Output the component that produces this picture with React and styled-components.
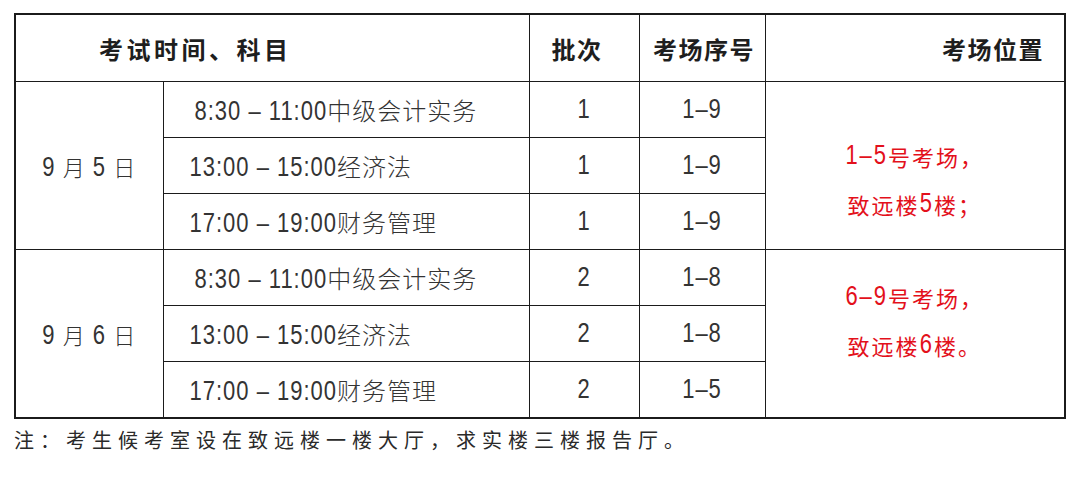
import styled, { createGlobalStyle } from "styled-components";

const GlobalStyle = createGlobalStyle`
  body {
    margin: 0;
    background: #ffffff;
    font-family: "Liberation Sans", "Noto Sans CJK SC", sans-serif;
  }
`;

const Page = styled.div`
  padding: 13px 0 0 14px;
`;

const Table = styled.table`
  border-collapse: collapse;
  table-layout: fixed;
  width: 1050px;
  border: 2px solid #1b1b1b;
`;

const Col = styled.col`
  width: ${({ w }) => w}px;
`;

const HeadCell = styled.th`
  height: 66px;
  border: 1.5px solid #1b1b1b;
  font-size: 24px;
  font-weight: 700;
  color: #1e1e1e;
  text-align: ${({ align }) => align || "center"};
  padding: ${({ pad }) => pad || "0"};
  letter-spacing: ${({ spacing }) => spacing || "1.5px"};
  white-space: nowrap;
`;

const Cell = styled.td`
  height: 55px;
  border: 1.5px solid #1b1b1b;
  font-size: 24px;
  font-weight: 300;
  color: #333333;
  letter-spacing: 1px;
  text-align: ${({ align }) => align || "center"};
  padding: ${({ pad }) => pad || "0"};
  white-space: nowrap;
  vertical-align: middle;
`;

const DateCell = styled(Cell)`
  font-size: 22px;
`;

const Place = styled(Cell)`
  color: #e3101b;
  font-size: 22px;
  font-weight: 400;
  line-height: 48px;
  letter-spacing: 2px;
  padding: ${({ shift }) => (shift > 0 ? `${shift * 2}px 0 0 0` : `0 0 ${-shift * 2}px 0`)};
`;

// the digits in the picture are tall and narrow
const Num = styled.span`
  display: inline-block;
  font-size: 22px;
  font-weight: 400;
  transform: scaleY(1.25);
  transform-origin: 50% 78%;
`;

const Note = styled.div`
  margin-top: 6px;
  font-size: 20px;
  color: #2a2a2a;
  letter-spacing: 6px;
  white-space: nowrap;
`;

const withNums = (text) =>
  text
    .split(/([0-9][0-9:\s–]*[0-9]|[0-9])/)
    .map((part, i) => (i % 2 === 1 ? <Num key={i}>{part}</Num> : part));

const days = [
  {
    date: "9 月 5 日",
    rooms: ["1–5号考场，", "致远楼5楼；"],
    shift: 17,
    sessions: [
      { time: "8:30 – 11:00中级会计实务", indent: true, batch: "1", range: "1–9" },
      { time: "13:00 – 15:00经济法", batch: "1", range: "1–9" },
      { time: "17:00 – 19:00财务管理", batch: "1", range: "1–9" },
    ],
  },
  {
    date: "9 月 6 日",
    rooms: ["6–9号考场，", "致远楼6楼。"],
    shift: -10,
    sessions: [
      { time: "8:30 – 11:00中级会计实务", indent: true, batch: "2", range: "1–8" },
      { time: "13:00 – 15:00经济法", batch: "2", range: "1–8" },
      { time: "17:00 – 19:00财务管理", batch: "2", range: "1–5" },
    ],
  },
];

const App = () => {
  return (
    <Page>
      <GlobalStyle />
      <Table>
        <colgroup>
          <Col w={148} />
          <Col w={366} />
          <Col w={110} />
          <Col w={126} />
          <Col w={300} />
        </colgroup>
        <thead>
          <tr>
            <HeadCell colSpan={2} align="left" pad="0 0 0 83px" spacing="3.5px">
              考试时间、科目
            </HeadCell>
            <HeadCell pad="0 14px 0 0">批次</HeadCell>
            <HeadCell pad="0 0 0 4px">考场序号</HeadCell>
            <HeadCell align="right" pad="0 20px 0 0">
              考场位置
            </HeadCell>
          </tr>
        </thead>
        <tbody>
          {days.map((day) =>
            day.sessions.map((s, i) => (
              <tr key={day.date + i}>
                {i === 0 && <DateCell rowSpan={3}>{withNums(day.date)}</DateCell>}
                <Cell align="left" pad={s.indent ? "0 0 0 31px" : "0 0 0 26px"}>
                  {withNums(s.time)}
                </Cell>
                <Cell>{withNums(s.batch)}</Cell>
                <Cell>{withNums(s.range)}</Cell>
                {i === 0 && (
                  <Place rowSpan={3} shift={day.shift}>
                    {withNums(day.rooms[0])}
                    <br />
                    {withNums(day.rooms[1])}
                  </Place>
                )}
              </tr>
            ))
          )}
        </tbody>
      </Table>
      <Note>注：考生候考室设在致远楼一楼大厅，求实楼三楼报告厅。</Note>
    </Page>
  );
};

export default App;
